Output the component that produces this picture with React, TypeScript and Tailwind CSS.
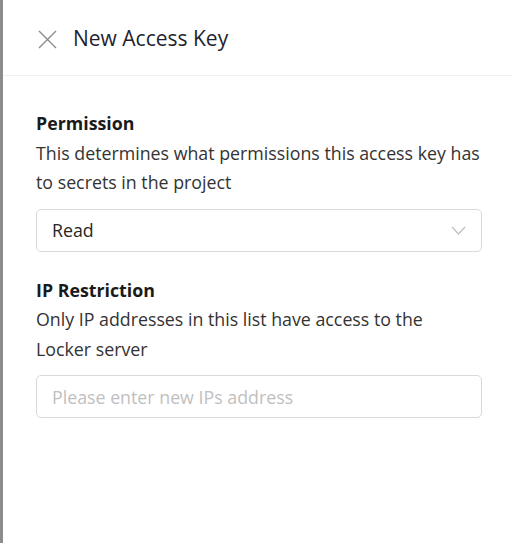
const font = { fontFamily: '"Open Sans", sans-serif' }

function CloseIcon() {
  return (
    <svg width="19" height="19" viewBox="0 0 19 19" className="text-[#8c8c8c]">
      <path d="M1 1L18 18M18 1L1 18" stroke="currentColor" strokeWidth="1.4" fill="none" />
    </svg>
  )
}

function Chevron() {
  return (
    <svg width="15" height="9" viewBox="0 0 15 9" className="text-[#bfbfbf]">
      <path d="M1 1L7.5 8L14 1" stroke="currentColor" strokeWidth="1.2" fill="none" />
    </svg>
  )
}

export default function App() {
  return (
    <div className="flex min-h-[543px] w-[512px] bg-white" style={font}>
      <div className="w-[3px] shrink-0 bg-[#8c8c8c]" />
      <div className="flex flex-1 flex-col">
        <header className="flex h-[76px] items-center gap-[16px] border-b border-[#f0f0f0] pl-[35px] pt-[3px]">
          <CloseIcon />
          <h1 className="text-[21px] font-medium text-[#1f1f2e]">New Access Key</h1>
        </header>
        <div className="flex flex-col pl-[33px] pr-[30px] pt-[33px]">
          <h2 className="text-[17.8px] leading-[29.5px] font-bold text-[#1a1a1a]">Permission</h2>
          <p className="text-[17.8px] leading-[29.5px] text-[#333]">
            This determines what permissions this access key has to secrets in the project
          </p>
          <button className="mt-[11px] flex h-[43px] items-center justify-between rounded-[5px] border border-[#d9d9d9] pl-[15px] pr-[15px] text-left">
            <span className="text-[17.8px] text-[#262626]">Read</span>
            <Chevron />
          </button>

          <h2 className="mt-[24px] text-[17.8px] leading-[29.5px] font-bold text-[#1a1a1a]">IP Restriction</h2>
          <p className="text-[17.8px] leading-[29.5px] text-[#333]">
            Only IP addresses in this list have access to the Locker server
          </p>
          <input
            className="mt-[11px] h-[43px] rounded-[5px] border border-[#d9d9d9] px-[15px] text-[17.8px] text-[#262626] outline-none placeholder:text-[#bfbfbf]"
            placeholder="Please enter new IPs address"
          />
        </div>
      </div>
    </div>
  )
}
